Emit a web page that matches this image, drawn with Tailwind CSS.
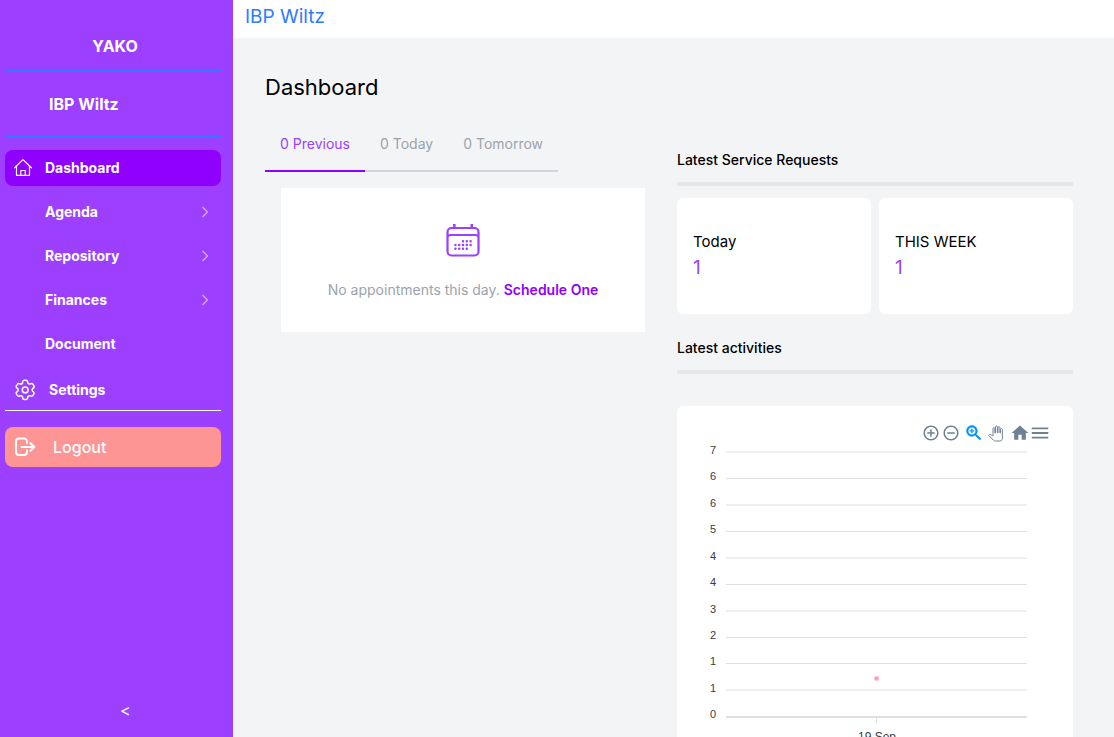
<!DOCTYPE html>
<html lang="en">
<head>
<meta charset="utf-8">
<meta name="viewport" content="width=device-width, initial-scale=1">
<title>Dashboard - IBP Wiltz</title>
<script src="https://cdn.jsdelivr.net/npm/@tailwindcss/browser@4"></script>
</head>
<body class="flex h-screen overflow-hidden bg-[#f3f4f6] font-['Inter',sans-serif] text-black">

<aside class="flex w-[233px] shrink-0 flex-col bg-[#9d3fff] pl-[5px] pr-3 text-white">
  <div class="flex h-[72px] items-end justify-center border-b-2 border-[#2f7bff] pb-3 pl-1">
    <span class="text-base leading-6 font-bold">YAKO</span>
  </div>
  <div class="flex h-[66px] items-center border-b-2 border-[#2f7bff] pl-11">
    <span class="text-base leading-6 font-bold">IBP Wiltz</span>
  </div>
  <nav class="mt-3 flex flex-col gap-2 text-sm font-bold">
    <a href="#" class="flex h-9 items-center rounded-lg bg-[#8f00ff] pl-2">
      <svg class="mr-3 size-5" viewBox="0 0 20 20" fill="none" stroke="currentColor" stroke-width="1.2" stroke-linejoin="round" stroke-linecap="round"><path d="M1.600 9.800 10 1.600l8.400 8.200M3.500 8.200v9.100h13V8.200M7.800 17.200v-4.700h4.400v4.700"/></svg>
      Dashboard
    </a>
    <a href="#" class="flex h-9 items-center justify-between pr-3 pl-10">Agenda
      <svg class="h-3 w-2 opacity-60" viewBox="0 0 8 12" fill="none" stroke="currentColor" stroke-width="1.2"><path d="m1.500 1 5 5-5 5"/></svg>
    </a>
    <a href="#" class="flex h-9 items-center justify-between pr-3 pl-10">Repository
      <svg class="h-3 w-2 opacity-60" viewBox="0 0 8 12" fill="none" stroke="currentColor" stroke-width="1.2"><path d="m1.500 1 5 5-5 5"/></svg>
    </a>
    <a href="#" class="flex h-9 items-center justify-between pr-3 pl-10">Finances
      <svg class="h-3 w-2 opacity-60" viewBox="0 0 8 12" fill="none" stroke="currentColor" stroke-width="1.2"><path d="m1.500 1 5 5-5 5"/></svg>
    </a>
    <a href="#" class="flex h-9 items-center pl-10">Document</a>
  </nav>
  <a href="#" class="mt-2 flex h-[41px] items-center gap-3 border-b border-white pl-2 text-sm font-bold">
    <svg class="size-6" viewBox="0 0 24 24" fill="none" stroke="currentColor" stroke-width="1.500" stroke-linejoin="round" stroke-linecap="round"><path d="M20.8064 7.62355L20.184 6.54346C19.6574 5.62954 18.4905 5.31426 17.5753 5.83866C17.1397 6.09528 16.6198 6.16809 16.1305 6.04103C15.6411 5.91396 15.2224 5.59746 14.9666 5.16131C14.8021 4.88409 14.7137 4.56833 14.7103 4.24598C14.7251 3.72916 14.5302 3.22834 14.1698 2.85761C13.8094 2.48688 13.3143 2.2778 12.7973 2.27798H11.5433C11.0367 2.27797 10.5511 2.47973 10.1938 2.83878C9.83644 3.19784 9.63693 3.68436 9.63937 4.19091C9.62435 5.23677 8.77224 6.07657 7.72632 6.07646C7.40397 6.07311 7.08821 5.9847 6.81099 5.82017C5.89582 5.29577 4.72887 5.61105 4.20229 6.52497L3.5341 7.62355C3.00817 8.53633 3.31916 9.70255 4.22975 10.2322C4.82166 10.574 5.18629 11.2055 5.18629 11.889C5.18629 12.5725 4.82166 13.204 4.22975 13.5457C3.32031 14.0719 3.00898 15.2353 3.5341 16.1453L4.16568 17.2345C4.4124 17.6797 4.82636 18.0082 5.31595 18.1474C5.80554 18.2865 6.3304 18.2248 6.77438 17.976C7.21084 17.7213 7.73094 17.6515 8.2191 17.7821C8.70725 17.9128 9.12299 18.2329 9.37392 18.6716C9.53845 18.9488 9.62686 19.2646 9.63021 19.5869C9.63021 20.6435 10.4867 21.5 11.5433 21.5H12.7973C13.8502 21.5001 14.7053 20.6491 14.7103 19.5962C14.7079 19.088 14.9086 18.6001 15.2679 18.2407C15.6272 17.8814 16.1152 17.6807 16.6233 17.6831C16.9449 17.6917 17.2594 17.7798 17.5387 17.9394C18.4515 18.4654 19.6177 18.1544 20.1474 17.2438L20.8064 16.1453C21.0615 15.7075 21.1315 15.186 21.001 14.6963C20.8704 14.2067 20.55 13.7893 20.1108 13.5366C19.6715 13.2839 19.3511 12.8665 19.2206 12.3769C19.09 11.8872 19.16 11.3657 19.4151 10.9279C19.581 10.6383 19.8211 10.3981 20.1108 10.2322C21.0159 9.70283 21.3262 8.54343 20.8064 7.62355Z"/><circle cx="12.175" cy="11.889" r="2.900"/></svg>
    Settings
  </a>
  <button type="button" class="mt-4 flex h-10 items-center gap-4 rounded-lg bg-[#fd9595] pl-2 text-base font-medium">
    <svg class="size-6" viewBox="0 0 24 24" fill="none" stroke="currentColor" stroke-width="2" stroke-linejoin="round" stroke-linecap="round"><path d="M14 8V6.500A3 3 0 0 0 11 3.500H6a3 3 0 0 0-3 3v10.500a3 3 0 0 0 3 3h5a3 3 0 0 0 3-3V15.500M21 12H8.500M17.500 8.200l3.800 3.800-3.800 3.800"/></svg>
    Logout
  </button>
  <button type="button" aria-label="Collapse sidebar" class="mt-auto mb-[15px] ml-[115px] self-start text-base leading-6">&lt;</button>
</aside>

<div class="flex min-w-0 flex-1 flex-col">
  <header class="h-[38px] shrink-0 bg-white px-3 py-[3px] text-[19px] leading-7 text-[#2f7bff]">IBP Wiltz</header>
  <main class="min-h-0 flex-1 overflow-hidden pr-[41px] pl-8">
    <h1 class="mt-[33px] text-[22px] leading-8">Dashboard</h1>
    <div class="mt-[13px] grid grid-cols-2 gap-4">
      <section>
        <div role="tablist" class="inline-flex text-sm text-[#9ca3af]">
          <button type="button" role="tab" aria-selected="true" class="h-14 border-b-2 border-[#8f00ff] px-[15px] pt-0.5 text-[#9d3fff]">0 Previous</button>
          <button type="button" role="tab" aria-selected="false" class="h-14 border-b-2 border-[#d1d5db] px-[15px] pt-0.5">0 Today</button>
          <button type="button" role="tab" aria-selected="false" class="h-14 border-b-2 border-[#d1d5db] px-[15px] pt-0.5">0 Tomorrow</button>
        </div>
        <div class="mx-4 mt-4 flex h-36 flex-col items-center bg-white pt-[34px] text-sm">
          <svg class="size-9 text-[#9d3fff]" viewBox="0 0 36 36" fill="none" stroke="currentColor"><rect x="2.500" y="6" width="31" height="27.500" rx="4" stroke-width="2.200"/><path stroke-width="2" d="M3 15q0-2 2.500-2h25q2.500 0 2.500 2"/><path stroke-width="2.600" d="M9.300 2v4M26.800 2v4"/><path stroke-width="2.500" stroke-linecap="round" d="M18 19.200h.01M21.800 19.200h.01M25.600 19.200h.01M10.400 23h.01M14.200 23h.01M18 23h.01M21.800 23h.01M25.600 23h.01M10.400 26.800h.01M14.200 26.800h.01M18 26.800h.01M21.800 26.800h.01"/></svg>
          <p class="mt-[22px] leading-5 text-[#9ca3af]">No appointments this day. <a href="#" class="font-semibold text-[#8f00ff]">Schedule One</a></p>
        </div>
      </section>
      <section class="pt-8">
        <h2 class="border-b-4 border-[#e5e7eb] pb-2.5 text-sm leading-6 font-medium">Latest Service Requests</h2>
        <div class="mt-3 grid grid-cols-2 gap-2">
          <div class="flex h-[116px] flex-col justify-center rounded-md bg-white px-4">
            <p class="text-[15px] leading-6">Today</p>
            <p class="text-[19px] leading-7 text-[#9d3fff]">1</p>
          </div>
          <div class="flex h-[116px] flex-col justify-center rounded-md bg-white px-4">
            <p class="text-[15px] leading-6">THIS WEEK</p>
            <p class="text-[19px] leading-7 text-[#9d3fff]">1</p>
          </div>
        </div>
        <h2 class="mt-[22px] border-b-4 border-[#e5e7eb] pb-2.5 text-sm leading-6 font-medium">Latest activities</h2>
        <div class="mt-8 rounded-md bg-white pt-[17px] pb-4">
          <div class="flex justify-end pr-[23px] text-[#6e8192]">
            <button type="button" aria-label="Zoom in" class="flex size-5 items-center justify-center"><svg class="size-[18px]" viewBox="0 0 24 24" fill="currentColor"><path d="M13 7h-2v4H7v2h4v4h2v-4h4v-2h-4V7zm-1-5C6.480 2 2 6.480 2 12s4.480 10 10 10 10-4.480 10-10S17.520 2 12 2zm0 18c-4.410 0-8-3.590-8-8s3.590-8 8-8 8 3.590 8 8-3.590 8-8 8z"/></svg></button>
            <button type="button" aria-label="Zoom out" class="flex size-5 items-center justify-center"><svg class="size-[18px]" viewBox="0 0 24 24" fill="currentColor"><path d="M7 11v2h10v-2H7zm5-9C6.480 2 2 6.480 2 12s4.480 10 10 10 10-4.480 10-10S17.520 2 12 2zm0 18c-4.410 0-8-3.590-8-8s3.590-8 8-8 8 3.590 8 8-3.590 8-8 8z"/></svg></button>
            <button type="button" aria-label="Selection zoom" class="ml-[3px] flex size-5 items-center justify-center text-[#008ffb]"><svg class="size-5" viewBox="0 0 24 24" fill="currentColor" stroke="currentColor" stroke-width="0.500"><path d="M15.500 14h-.79l-.28-.27C15.410 12.590 16 11.110 16 9.500 16 5.910 13.090 3 9.500 3S3 5.910 3 9.500 5.910 16 9.500 16c1.610 0 3.090-.59 4.230-1.570l.27.28v.79l5 4.990L20.490 19l-4.990-5zm-6 0C7.010 14 5 11.990 5 9.500S7.010 5 9.500 5 14 7.010 14 9.500 11.990 14 9.500 14z"/><path d="M12 10h-2v2H9v-2H7V9h2V7h1v2h2v1z"/></svg></button>
            <button type="button" aria-label="Pan" class="mr-px ml-px flex size-5 items-center justify-center"><svg class="size-[15px] overflow-visible" viewBox="0 0 24 24" fill="none" stroke="currentColor" stroke-width="1.600"><path d="M23 5.500V20c0 2.200-1.800 4-4 4h-7.300c-1.080 0-2.100-.43-2.850-1.190L1 14.830s1.260-1.230 1.300-1.250c.22-.19.49-.29.79-.29.22 0 .42.06.6.16.04.01 4.310 2.460 4.310 2.460V4c0-.83.67-1.500 1.500-1.500S11 3.170 11 4v7h1V1.500c0-.83.67-1.500 1.500-1.500S15 .67 15 1.500V11h1V2.500c0-.83.67-1.500 1.500-1.500s1.500.67 1.500 1.500V11h1V5.500c0-.83.67-1.500 1.500-1.500s1.500.67 1.500 1.500z"/></svg></button>
            <button type="button" aria-label="Reset zoom" class="ml-1 flex size-5 items-center justify-center"><svg class="size-5" viewBox="0 0 24 24" fill="currentColor"><path d="M10 20v-6h4v6h5v-8h3L12 3 2 12h3v8z"/></svg></button>
            <button type="button" aria-label="Menu" class="flex size-5 items-center justify-center"><svg class="size-[22px] shrink-0" viewBox="0 0 24 24" fill="currentColor"><path d="M3 18h18v-2H3v2zm0-5h18v-2H3v2zm0-7v2h18V6H3z"/></svg></button>
          </div>
          <svg class="block w-full" viewBox="0 0 396 310" role="img" aria-label="Activity chart">
            <g stroke="#e0e0e0" stroke-width="1">
              <path d="M49 9H350M49 35.500H350M49 62H350M49 88.500H350M49 115H350M49 141.500H350M49 168H350M49 194.500H350M49 220.500H350M49 247H350"/>
              <path stroke-width="2" d="M49 274H350"/><path d="M199.500 274v6"/>
            </g>
            <circle cx="199.500" cy="235.500" r="2.300" fill="#ff9ac4"/>
            <g class="font-['Liberation_Sans',sans-serif] text-[11px]" fill="#373d3f" text-anchor="end">
              <text x="39" y="11">7</text><text x="39" y="37">6</text><text x="39" y="64">6</text><text x="39" y="90">5</text><text x="39" y="117">4</text><text x="39" y="143">4</text><text x="39" y="170">3</text><text x="39" y="196">2</text><text x="39" y="222">1</text><text x="39" y="249">1</text><text x="39" y="275">0</text>
            </g>
            <text class="font-['Liberation_Sans',sans-serif] text-[12px]" x="200" y="298" fill="#373d3f" text-anchor="middle">19 Sep</text>
          </svg>
        </div>
      </section>
    </div>
  </main>
</div>
</body>
</html>
